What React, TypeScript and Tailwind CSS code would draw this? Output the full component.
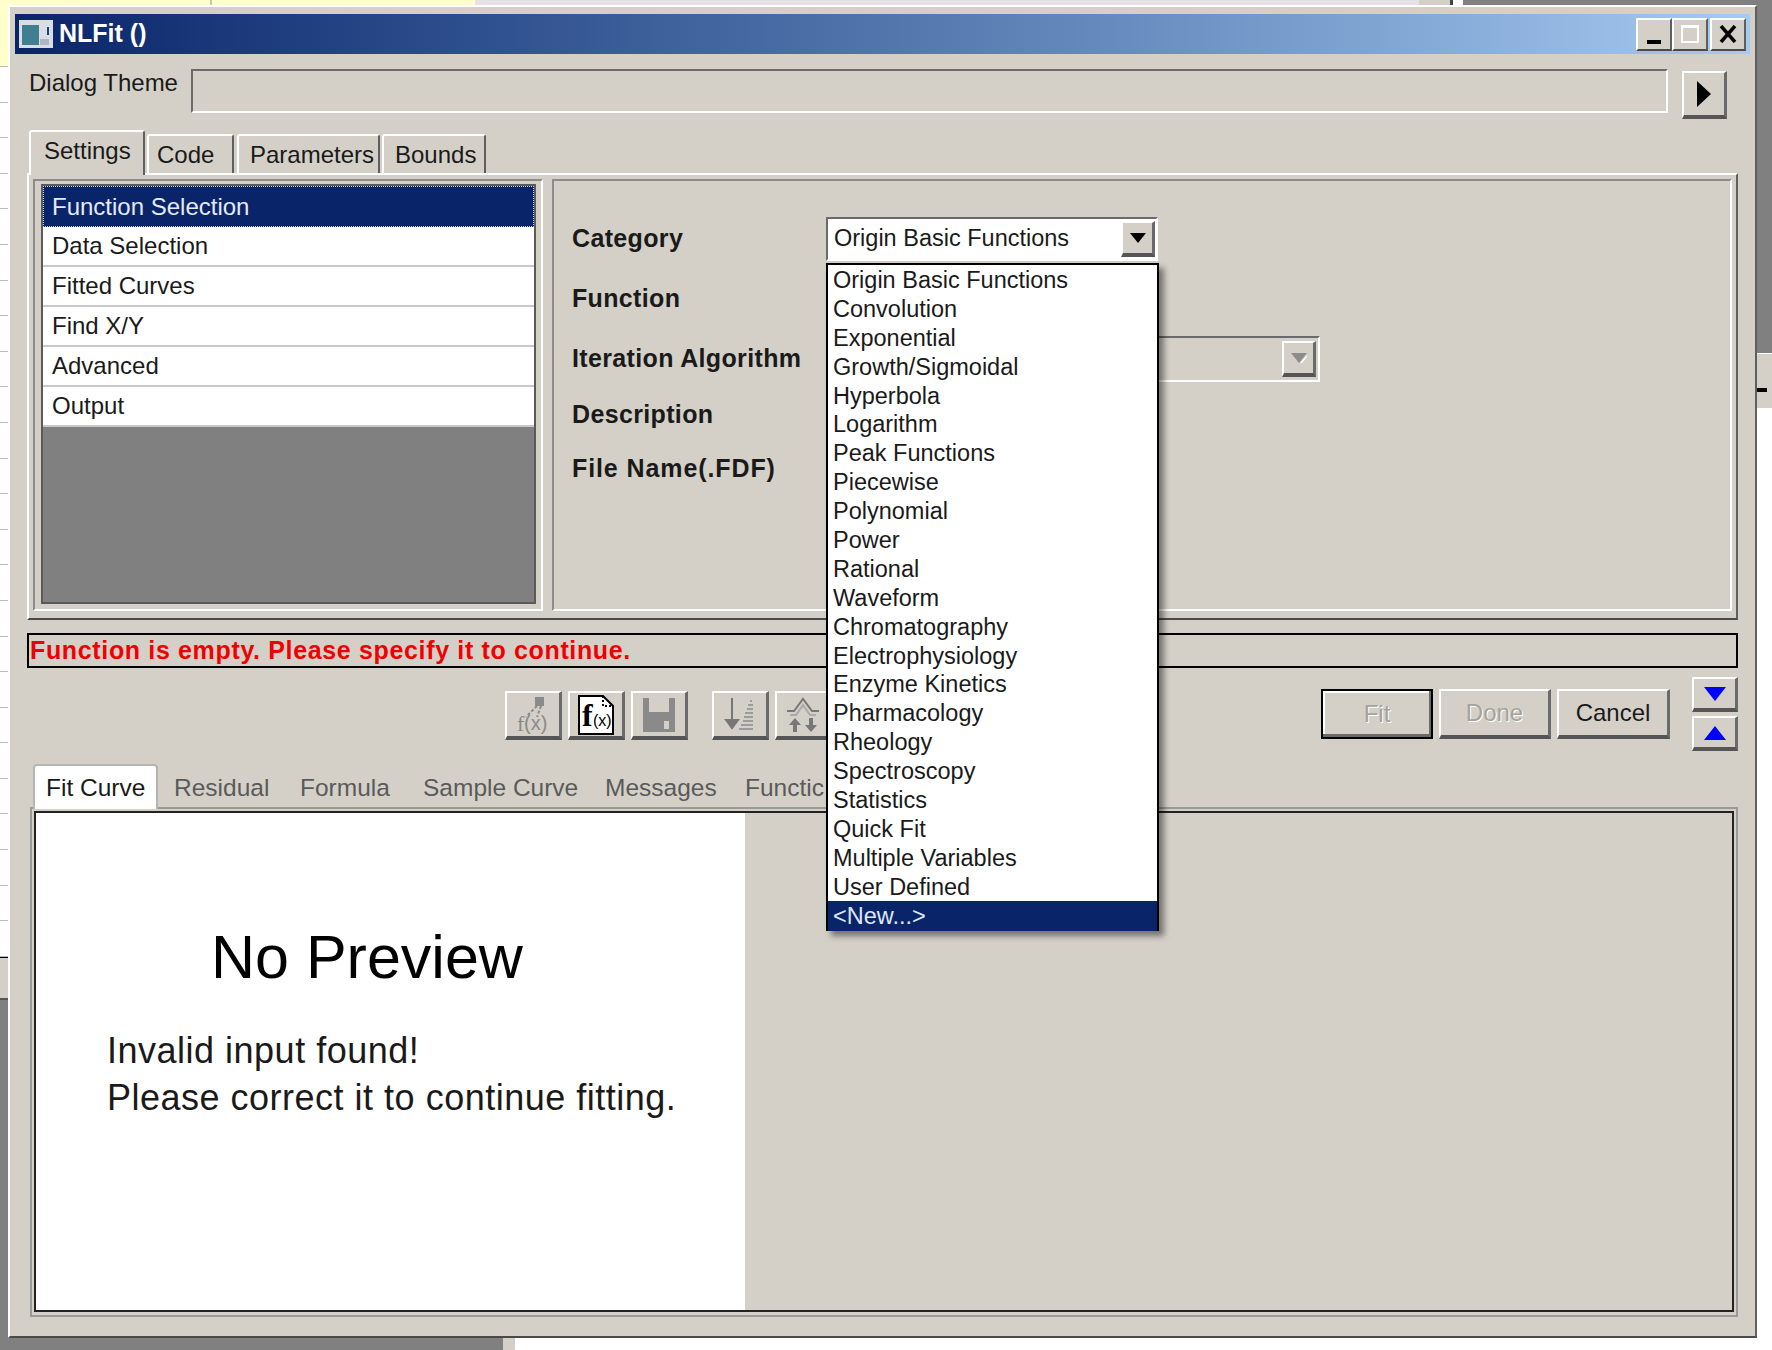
import React from 'react';

const FONT = "[font-family:'Liberation_Sans',Arial,sans-serif]";
const RAISED = 'border-2 border-t-white border-l-white border-r-[#5f5f5f] border-b-[#4a4a4a]';
const RAISED_THICK = 'border-t-2 border-l-2 border-r-[3px] border-b-[4px] border-t-white border-l-white border-r-[#6a6a6a] border-b-[#555]';
const SUNKEN = 'border-2 border-t-[#6a6a6a] border-l-[#6a6a6a] border-r-white border-b-white';
const GROOVE = 'border-2 border-t-[#8c8c8c] border-l-[#8c8c8c] border-r-white border-b-white';

const CATEGORIES = [
  'Origin Basic Functions', 'Convolution', 'Exponential', 'Growth/Sigmoidal', 'Hyperbola', 'Logarithm',
  'Peak Functions', 'Piecewise', 'Polynomial', 'Power', 'Rational', 'Waveform', 'Chromatography',
  'Electrophysiology', 'Enzyme Kinetics', 'Pharmacology', 'Rheology', 'Spectroscopy', 'Statistics',
  'Quick Fit', 'Multiple Variables', 'User Defined',
];

const NAV_ITEMS = ['Data Selection', 'Fitted Curves', 'Find X/Y', 'Advanced', 'Output'];

function TitleIcon() {
  return (
    <svg width="34" height="28" viewBox="0 0 34 28">
      <rect width="34" height="28" fill="#d9dde6" />
      <rect x="3" y="5" width="17" height="20" fill="#3f7f8f" />
      <rect x="21" y="19" width="9" height="6" fill="#aeb6c4" />
      <rect x="28" y="7" width="2" height="8" fill="#1d3f86" />
    </svg>
  );
}

function ToolIcon({ kind }: { kind: 'flow' | 'fx' | 'save' | 'sort' | 'peak' }) {
  const gray = '#8a8a8a';
  if (kind === 'fx') {
    return (
      <svg width="36" height="40" viewBox="0 0 36 40">
        <path d="M1 1H25L35 11V39H1Z" fill="white" stroke="black" strokeWidth="2" />
        <path d="M25 1V11H35" fill="none" stroke="black" strokeWidth="2" strokeDasharray="2 2" />
        <text x="4" y="31" fontFamily="Liberation Serif" fontWeight="700" fontSize="32" fill="black">f</text>
        <text x="15" y="31" fontFamily="Liberation Sans" fontSize="16" fill="black">(x)</text>
      </svg>
    );
  }
  if (kind === 'save') {
    return (
      <svg width="32" height="34" viewBox="0 0 32 34">
        <path d="M0 0H32V34H0Z" fill={gray} />
        <rect x="6" y="0" width="20" height="14" fill="#d4d0c8" />
        <rect x="21" y="23" width="5" height="8" fill="#d4d0c8" />
      </svg>
    );
  }
  if (kind === 'flow') {
    return (
      <svg width="34" height="38" viewBox="0 0 34 38">
        <rect x="19" y="1" width="9" height="9" fill={gray} />
        <path d="M21 10L10 21M25 10L21 21" stroke={gray} strokeWidth="2" strokeDasharray="3 2" />
        <text x="1" y="35" fontFamily="Liberation Serif" fontSize="22" fill={gray}>f</text>
        <text x="8" y="34" fontFamily="Liberation Sans" fontSize="20" fill={gray}>(x)</text>
      </svg>
    );
  }
  if (kind === 'sort') {
    return (
      <svg width="34" height="36" viewBox="0 0 34 36">
        <path d="M9 1V28M3 23L9 31L15 23Z" stroke="#777" strokeWidth="2" fill="#777" />
        <path d="M29 4H27M30 8H25M30 12H24M30 16H22M30 20H21M30 24H20M30 28H18M30 32H16" stroke="#9c9c9c" strokeWidth="2" />
      </svg>
    );
  }
  return (
    <svg width="34" height="36" viewBox="0 0 34 36">
      <path d="M1 14H8L17 2L26 14H33" stroke="#777" strokeWidth="2" fill="none" />
      <path d="M4 18H10L17 8L24 18H30" stroke="#aaa" strokeWidth="2" fill="none" />
      <path d="M9 21L3 28H7V35H11V28H15Z" fill="#777" />
      <path d="M25 35L19 28H23V21H27V28H31Z" fill="#777" />
    </svg>
  );
}

function ToolButton({ kind, ml = '' }: { kind: 'flow' | 'fx' | 'save' | 'sort' | 'peak'; ml?: string }) {
  return (
    <div className={`${RAISED_THICK} ${ml} w-[57px] h-[49px] flex items-center justify-center shrink-0`}>
      <ToolIcon kind={kind} />
    </div>
  );
}

function ComboArrow({ color, shade }: { color: string; shade?: boolean }) {
  return (
    <div className={`${RAISED_THICK} w-[34px] h-[36px] flex items-center justify-center bg-[#d4d0c8]`}>
      <svg width="16" height="10" viewBox="0 0 16 10">
        <path d="M0 0H16L8 10Z" fill={color} />
        {shade && <path d="M16 2L9 10H11L16 4Z" fill="white" />}
      </svg>
    </div>
  );
}

function FieldRow({ label, height, tracking = 'tracking-[0.35px]', children }: { label: string; height: string; tracking?: string; children?: React.ReactNode }) {
  return (
    <div className={`${height} flex items-center`}>
      <div className={`${tracking} w-[254px] shrink-0 text-[25px] font-bold text-[#1a1a1a] whitespace-nowrap`}>{label}</div>
      {children}
    </div>
  );
}

function Dropdown() {
  return (
    <div className="absolute left-[816px] top-[256px] w-[333px] h-[668px] bg-white border-2 border-black shadow-[5px_5px_6px_rgba(0,0,0,0.45)] text-[23.5px] leading-[31px] text-[#1a1a1a]">
      {CATEGORIES.map((c) => (
        <div key={c} className="h-[28.9px] pl-[5px] whitespace-nowrap">{c}</div>
      ))}
      <div className="h-[30px] pl-[5px] bg-[#0a246a] text-[#dfe6f5]">{'<New...>'}</div>
    </div>
  );
}

export default function App() {
  return (
    <div className={`${FONT} relative w-[1772px] h-[1350px] overflow-hidden bg-[#808080]`}>
      {/* desktop behind the dialog */}
      <div className="absolute left-0 top-0 w-[8px] h-[958px] flex flex-col bg-white border-b-2 border-black">
        <div className="h-[67px] bg-[#ffffcc] border-b border-[#bbb] shrink-0" />
        {Array.from({ length: 25 }).map((_, i) => (
          <div key={i} className="h-[35.6px] border-b border-[#bbb] shrink-0" />
        ))}
      </div>
      <div className="absolute left-0 top-[958px] w-[8px] h-[42px] bg-[#d4d0c8] border-b-2 border-[#555]" />
      <div className="absolute left-0 top-0 w-[475px] h-[5px] bg-[#ffffcc]" />
      <div className="absolute left-[210px] top-0 w-[2px] h-[5px] bg-[#c8c8a8]" />
      <div className="absolute left-[475px] top-0 w-[944px] h-[5px] bg-[#e4e2e6]" />
      <div className="absolute left-[1419px] top-0 w-[31px] h-[5px] bg-[#d4d0c8]" />
      <div className="absolute left-[1450px] top-0 w-[3px] h-[5px] bg-[#444]" />
      <div className="absolute left-[1453px] top-0 w-[10px] h-[5px] bg-white" />
      <div className="absolute left-[1757px] top-[353px] w-[15px] h-[55px] bg-[#d4d0c8] border-t border-white">
        <div className="mt-[34px] w-[10px] h-[4px] bg-black" />
      </div>
      <div className="absolute left-[1757px] top-[408px] w-[15px] h-[942px] bg-white" />
      <div className="absolute left-[503px] top-[1336px] w-[12px] h-[14px] bg-[#d4d0c8]" />
      <div className="absolute left-[515px] top-[1338px] right-0 h-[12px] bg-white" />

      {/* dialog */}
      <div className={`${RAISED} absolute left-[8px] top-[5px] w-[1749px] h-[1333px] bg-[#d4d0c8] px-[5px] pt-[7px]`}>
        <div className="h-[40px] flex items-center pl-[4px] pr-[4px] bg-gradient-to-r from-[#0a246a] to-[#a6caf0]">
          <TitleIcon />
          <span className="ml-[6px] text-[25px] font-bold text-white">NLFit ()</span>
          <div className="ml-auto flex">
            <div className={`${RAISED} w-[36px] h-[33px] bg-[#d4d0c8] flex items-end justify-center pb-[5px]`}>
              <div className="w-[14px] h-[4px] bg-black" />
            </div>
            <div className={`${RAISED} w-[36px] h-[33px] bg-[#d4d0c8] flex items-center justify-center`}>
              <div className="w-[18px] h-[18px] border-2 border-white border-t-[3px]" />
            </div>
            <div className={`${RAISED} ml-[2px] w-[36px] h-[33px] bg-[#d4d0c8] flex items-center justify-center`}>
              <svg width="18" height="18" viewBox="0 0 18 18">
                <path d="M2 1L16 17M16 1L2 17" stroke="black" strokeWidth="3.5" />
              </svg>
            </div>
          </div>
        </div>

        {/* dialog theme */}
        <div className="mt-[15px] h-[50px] flex items-start">
          <div className="ml-[14px] w-[162px] text-[24px] leading-[30px] text-[#1a1a1a] -mt-[1px]">Dialog Theme</div>
          <div className={`${SUNKEN} w-[1477px] h-[44px]`} />
          <div className={`${RAISED_THICK} ml-[14px] mt-[2px] w-[45px] h-[48px] flex items-center justify-center`}>
            <svg width="16" height="28" viewBox="0 0 16 28"><path d="M1 1L15 14L1 27Z" fill="black" /></svg>
          </div>
        </div>

        {/* settings tabs */}
        <div className="mt-[10px] h-[44px] flex items-end pl-[14px] text-[24px] text-[#1a1a1a] relative z-10">
          <div className="w-[116px] h-[45px] -mb-[2px] pl-[13px] pt-[1px] bg-[#d4d0c8] border-l-2 border-t-2 border-white border-r-2 border-r-[#5f5f5f] rounded-t-[3px]">Settings</div>
          <div className="ml-[2px] w-[87px] h-[39px] pl-[8px] pt-[1px] border-t-2 border-l-2 border-white border-r-2 border-r-[#5f5f5f] rounded-t-[3px]">Code</div>
          <div className="ml-[3px] w-[143px] h-[39px] pl-[11px] pt-[1px] border-t-2 border-l-2 border-white border-r-2 border-r-[#5f5f5f] rounded-t-[3px]">Parameters</div>
          <div className="ml-[2px] w-[104px] h-[39px] pl-[11px] pt-[1px] border-t-2 border-l-2 border-white border-r-2 border-r-[#5f5f5f] rounded-t-[3px]">Bounds</div>
        </div>
        <div className={`${RAISED} ml-[12px] w-[1711px] h-[447px] flex gap-[9px] p-[4px]`}>
          <div className={`${GROOVE} w-[510px] h-[432px] px-[5px] pt-[3px] pb-[5px]`}>
            <div className="h-full ml-[1px] bg-[#808080] border-2 border-[#5a5a5a] text-[24px] text-[#1a1a1a]">
              <div className="h-[41px] leading-[39px] pl-[8px] bg-[#0a246a] text-[#e4eaf6] border border-dotted border-[#c8cfdf]">Function Selection</div>
              {NAV_ITEMS.map((n) => (
                <div key={n} className="h-[40px] leading-[38px] pl-[9px] bg-white border-b-2 border-[#c9c9c9]">{n}</div>
              ))}
            </div>
          </div>
          <div className={`${GROOVE} flex-1 h-[432px] pl-[18px] pt-[28px]`}>
            <FieldRow label="Category" height="h-[60px]">
              <div className={`${SUNKEN} w-[332px] h-[44px] bg-white flex items-center justify-between pl-[6px] pr-[1px] text-[23.5px] text-[#1a1a1a]`}>
                <span>Origin Basic Functions</span>
                <ComboArrow color="black" />
              </div>
            </FieldRow>
            <FieldRow label="Function" height="h-[60px]" />
            <FieldRow label="Iteration Algorithm" height="h-[60px]">
              <div className={`${SUNKEN} w-[494px] h-[46px] flex items-center justify-end pr-[2px]`}>
                <ComboArrow color="#8c8c8c" shade />
              </div>
            </FieldRow>
            <FieldRow label="Description" height="h-[52px]" />
            <FieldRow label="File Name(.FDF)" height="h-[56px]" tracking="tracking-[0.9px]" />
          </div>
        </div>

        {/* status line */}
        <div className="mt-[13px] ml-[12px] w-[1711px] h-[35px] border-2 border-black text-[25px] font-bold text-[#f00000] leading-[30px] pl-[1px] tracking-[0.65px] whitespace-nowrap">
          Function is empty. Please specify it to continue.
        </div>

        {/* toolbar and buttons */}
        <div className="mt-[9px] h-[85px] flex items-start">
          <div className="ml-[490px] mt-[14px] flex gap-[6px]">
            <ToolButton kind="flow" />
            <ToolButton kind="fx" />
            <ToolButton kind="save" />
            <ToolButton kind="sort" ml="ml-[18px]" />
            <ToolButton kind="peak" />
          </div>
          <div className="ml-[489px] mt-[12px] flex gap-[6px] text-[24px]">
            <div className="w-[112px] h-[50px] border-2 border-black flex items-center justify-center text-[#a5a29b] [text-shadow:1px_1px_0_#fff] shadow-[inset_-2px_-3px_0_#6a6a6a,inset_2px_2px_0_#fff]">Fit</div>
            <div className={`${RAISED_THICK} w-[112px] h-[50px] flex items-center justify-center text-[#a5a29b] [text-shadow:1px_1px_0_#fff]`}>Done</div>
            <div className={`${RAISED_THICK} w-[113px] h-[50px] flex items-center justify-center text-[#1a1a1a]`}>Cancel</div>
          </div>
          <div className="ml-[22px] flex flex-col gap-[4px]">
            <div className={`${RAISED_THICK} w-[46px] h-[35px] flex items-center justify-center`}>
              <svg width="22" height="14" viewBox="0 0 22 14"><path d="M0 0H22L11 14Z" fill="#0000ff" /></svg>
            </div>
            <div className={`${RAISED_THICK} w-[46px] h-[35px] flex items-center justify-center`}>
              <svg width="22" height="14" viewBox="0 0 22 14"><path d="M0 14H22L11 0Z" fill="#0000ff" /></svg>
            </div>
          </div>
        </div>

        {/* preview tabs */}
        <div className="h-[45px] flex items-end pl-[18px] text-[24.5px] text-[#5a5a5a] relative z-10">
          <div className="w-[125px] h-[45px] -mb-[2px] pl-[11px] leading-[44px] bg-white text-[#1a1a1a] border-t-2 border-x-2 border-[#b5b5b5] rounded-t-[4px]">Fit Curve</div>
          <div className="ml-[16px] w-[126px] leading-[39px]">Residual</div>
          <div className="w-[123px] leading-[39px]">Formula</div>
          <div className="w-[182px] leading-[39px]">Sample Curve</div>
          <div className="w-[140px] leading-[39px]">Messages</div>
          <div className="leading-[39px]">Functic</div>
        </div>
        <div className="ml-[15px] w-[1708px] h-[510px] border-2 border-[#9a9a9a] p-[2px]">
          <div className="h-[501px] border-2 border-[#222] flex">
            <div className="w-[709px] bg-white pl-[71px]">
              <div className="pl-[104px] pt-[109px] text-[61px] leading-[70px] text-black whitespace-nowrap">No Preview</div>
              <div className="mt-[35px] text-[36px] leading-[47px] text-[#1a1a1a] tracking-[0.5px]">
                <div>Invalid input found!</div>
                <div>Please correct it to continue fitting.</div>
              </div>
            </div>
          </div>
        </div>

        <Dropdown />
      </div>
    </div>
  );
}
